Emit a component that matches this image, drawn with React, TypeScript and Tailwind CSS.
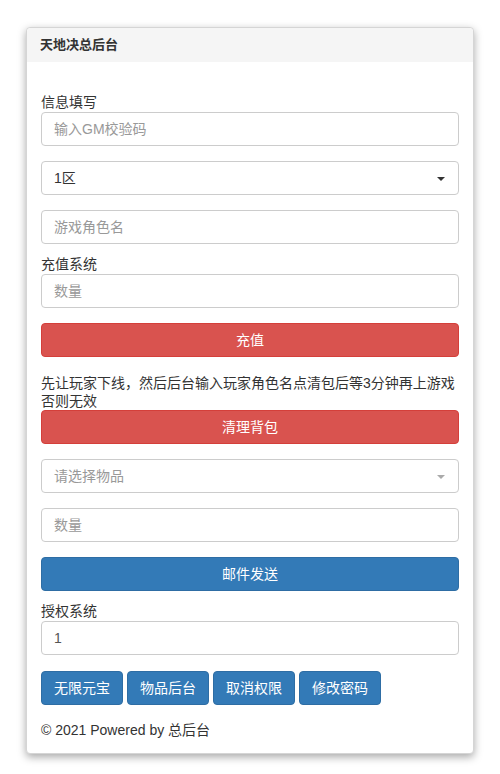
import React from 'react';

const font = { fontFamily: '"Liberation Sans", "Noto Sans CJK SC", sans-serif' };

const inputCls =
  'block w-full h-[34px] rounded-[4px] border border-[#ccc] bg-white px-[12px] text-[14px] text-[#555] placeholder:text-[#999] outline-none';

const Caret: React.FC<{ muted?: boolean }> = ({ muted }) => (
  <span
    className={
      muted
        ? 'absolute right-[13px] top-[15px] h-0 w-0 border-x-[4px] border-t-[4px] border-x-transparent border-t-[#aaa]'
        : 'absolute right-[13px] top-[15px] h-0 w-0 border-x-[4px] border-t-[4px] border-x-transparent border-t-[#333]'
    }
  />
);

const App: React.FC = () => {
  return (
    <div className="min-h-[774px] bg-white pt-[27px] text-[#333]" style={font}>
      <div className="ml-[26px] w-[448px] rounded-[4px] border border-[#d5d5d5] bg-white shadow-[0_3px_9px_rgba(0,0,0,0.35)]">
        {/* Header */}
        <div className="flex h-[34px] items-center rounded-t-[4px] bg-[#f5f5f5] px-[13px] text-[13px] font-bold text-[#333]">
          天地决总后台
        </div>

        {/* Body */}
        <div className="px-[14px] pb-[13px] pt-[30px] text-[14px]">
          <label className="block leading-[20px]">信息填写</label>
          <input className={inputCls} placeholder="输入GM校验码" />

          <div className="relative mt-[15px] flex h-[34px] items-center rounded-[4px] border border-[#ccc] px-[12px] text-[14px] text-[#333]">
            1区
            <Caret />
          </div>

          <input className={`${inputCls} mt-[15px]`} placeholder="游戏角色名" />

          <label className="mt-[10px] block leading-[20px]">充值系统</label>
          <input className={inputCls} placeholder="数量" />

          <button className="mt-[15px] block h-[34px] w-full rounded-[4px] border border-[#d43f3a] bg-[#d9534f] text-[14px] text-white">
            充值
          </button>

          <p className="mt-[17px] leading-[18px]">
            先让玩家下线，然后后台输入玩家角色名点清包后等3分钟再上游戏否则无效
          </p>

          <button className="block h-[34px] w-full rounded-[4px] border border-[#d43f3a] bg-[#d9534f] text-[14px] text-white">
            清理背包
          </button>

          <div className="relative mt-[15px] flex h-[34px] items-center rounded-[4px] border border-[#ccc] px-[12px] text-[14px] text-[#999]">
            请选择物品
            <Caret muted />
          </div>

          <input className={`${inputCls} mt-[15px]`} placeholder="数量" />

          <button className="mt-[15px] block h-[34px] w-full rounded-[4px] border border-[#2e6da4] bg-[#337ab7] text-[14px] text-white">
            邮件发送
          </button>

          <label className="mt-[10px] block leading-[20px]">授权系统</label>
          <input className={inputCls} defaultValue="1" />

          <div className="mt-[16px] flex gap-[4px]">
            {['无限元宝', '物品后台', '取消权限', '修改密码'].map((t) => (
              <button
                key={t}
                className="h-[34px] w-[82px] rounded-[4px] border border-[#2e6da4] bg-[#337ab7] text-[14px] text-white"
              >
                {t}
              </button>
            ))}
          </div>

          <div className="mt-[15px] leading-[20px]">© 2021 Powered by 总后台</div>
        </div>
      </div>
    </div>
  );
};

export default App;
